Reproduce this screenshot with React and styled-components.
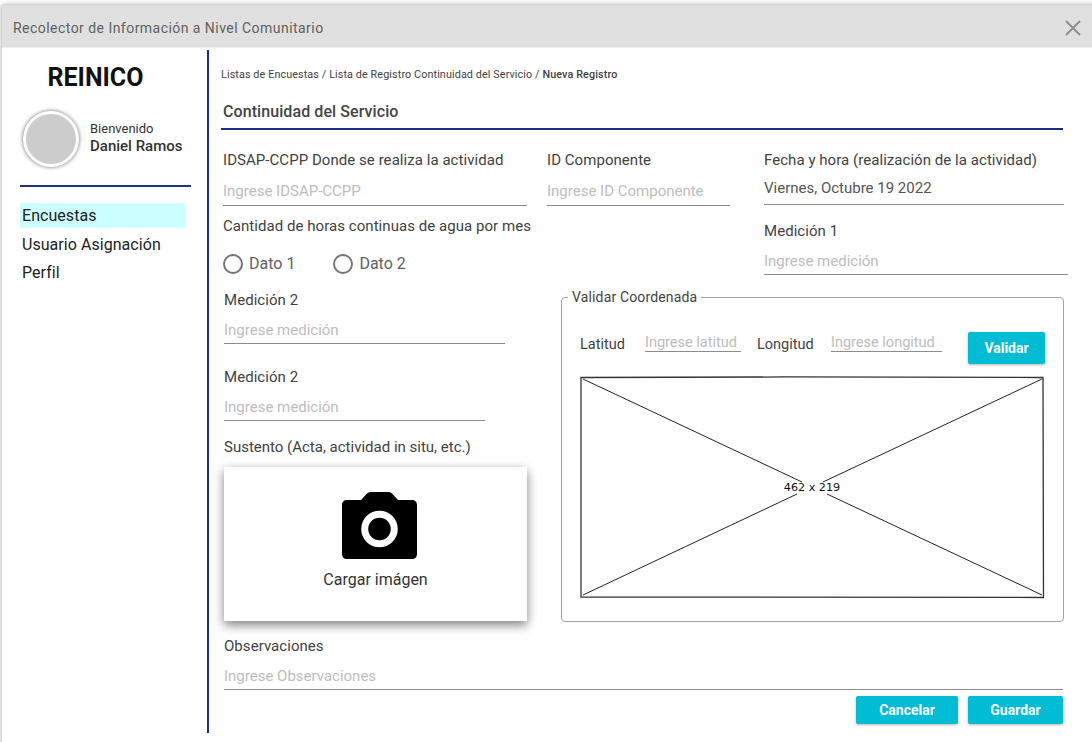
import React from 'react';
import styled, { createGlobalStyle } from 'styled-components';

const Global = createGlobalStyle`
  html, body { margin: 0; padding: 0; background: #fff; }
  body { font-family: Roboto, "Liberation Sans", sans-serif; color: #424242; overflow: hidden; }
`;

const Page = styled.div`
  width: 1092px;
  height: 742px;
  padding: 5px 0 0 2px;
  box-sizing: border-box;
  overflow: hidden;
`;
const Dialog = styled.div`
  width: 1095px;
  height: 750px;
  background: #fff;
  box-shadow: 0 0 5px rgba(0, 0, 0, 0.4);
  display: flex;
  flex-direction: column;
`;
const Header = styled.header`
  height: 43px;
  flex: none;
  background: #e0e0e0;
  display: flex;
  align-items: center;
  justify-content: space-between;
  padding: 3px 11px 0;
  width: 1090px;
  box-sizing: border-box;
  border-bottom: 1px solid #eeeeee;
`;
const HeaderTitle = styled.h1`
  margin: 0;
  font-size: 14px;
  font-weight: 400;
  color: #616161;
  letter-spacing: 0.46px;
`;
const CloseIcon = styled.svg`
  width: 16px;
  height: 16px;
  stroke: #8c8c8c;
  stroke-width: 1.8;
  fill: none;
`;
const Body = styled.div`
  display: flex;
  flex: 1;
`;
const Sidebar = styled.aside`
  flex: none;
  padding-top: 14px;
  box-sizing: border-box;
  height: 683px;
  margin-top: 2px;
  border-right: 2px solid #1f3082;
  width: 207px;
`;
const Brand = styled.div`
  width: 187px;
  text-align: center;
  font-size: 25px;
  line-height: 28px;
  font-weight: 700;
  color: #111;
`;
const UserRow = styled.div`
  display: flex;
  align-items: center;
  gap: 11px;
  margin: 19px 0 0 21px;
`;
const Avatar = styled.div`
  width: 50px;
  height: 50px;
  border-radius: 50%;
  background: #cccccc;
  border: 3px solid #fff;
  box-shadow: 0 0 4px rgba(0, 0, 0, 0.6);
`;
const UserText = styled.div`
  display: flex;
  flex-direction: column;
  margin-top: -2px;
`;
const Welcome = styled.span`
  font-size: 13px;
  line-height: 16px;
  color: #333;
`;
const UserName = styled.span`
  font-size: 15px;
  line-height: 18px;
  font-weight: 500;
  color: #333;
`;
const SideRule = styled.hr`
  margin: 18px 16px 0 18px;
  border: 0;
  height: 2px;
  background: #1f3082;
`;
const Menu = styled.nav`
  margin: 16px 0 0 18px;
  width: 165px;
  display: flex;
  flex-direction: column;
`;
const MenuItem = styled.a`
  height: 25px;
  margin-bottom: 3.5px;
  line-height: 25px;
  padding-left: 2px;
  font-size: 16px;
  letter-spacing: 0.05px;
  color: #222;
  background: ${p => (p.$active ? '#ccffff' : 'transparent')};
`;
const Main = styled.main`
  flex: none;
  width: 842px;
  margin-left: 12px;
  padding-top: 20px;
  box-sizing: border-box;
`;
const Crumbs = styled.div`
  font-size: 10.75px;
  line-height: 14px;
  color: #424242;
  letter-spacing: 0.12px;
  b { font-weight: 500; }
`;
const Title = styled.h2`
  margin: 15px 0 0;
  padding: 4px 0 0 2px;
  height: 33px;
  box-sizing: border-box;
  line-height: 21px;
  font-size: 16px;
  font-weight: 500;
  color: #444;
  letter-spacing: 0.08px;
  border-bottom: 2px solid #1f3082;
`;
const TopGrid = styled.div`
  display: grid;
  grid-template-columns: 304px 183px 314px;
  column-gap: 20px;
  margin: 20px 0 0 2px;
  & > :nth-child(3) { margin-left: 14px; }
`;
const Field = styled.div`
  display: flex;
  flex-direction: column;
  width: ${p => p.$w || 'auto'};
  margin-top: ${p => p.$mt || 0};
  margin-right: ${p => p.$mr || 0};
`;
const Label = styled.label`
  font-size: 15px;
  line-height: 20px;
  color: #424242;
  white-space: nowrap;
  letter-spacing: 0.05px;
`;
const Input = styled.div`
  height: 34px;
  margin-top: ${p => p.$mt || '2px'};
  box-sizing: border-box;
  border-bottom: 1px solid #8c8c8c;
  font-size: 15px;
  line-height: ${p => (p.$value ? '35px' : p.$lh || '39px')};
  color: ${p => (p.$value ? '#555' : '#bdbdbd')};
  white-space: nowrap;
`;
const MiddleRow = styled.div`
  display: flex;
  justify-content: space-between;
  margin: 10px 0 0 2px;
`;
const Radios = styled.div`
  display: flex;
  gap: 38px;
  margin-top: 18px;
`;
const Radio = styled.span`
  display: flex;
  align-items: center;
  gap: 6px;
  font-size: 16px;
  line-height: 20px;
  color: #616161;
  &::before {
    content: '';
    width: 20px;
    height: 20px;
    box-sizing: border-box;
    border: 2px solid #757575;
    border-radius: 50%;
  }
`;
const Columns = styled.div`
  display: flex;
  margin-top: 15px;
`;
const LeftColumn = styled.div`
  width: 340px;
  flex: none;
  padding-left: 3px;
  box-sizing: border-box;
`;
const Caption = styled.div`
  font-size: 15px;
  line-height: 20px;
  margin-top: 16px;
  color: #424242;
`;
const Upload = styled.div`
  width: 303px;
  height: 154px;
  margin-top: 10px;
  background: #fff;
  box-shadow: 0 4px 10px rgba(0, 0, 0, 0.5);
  display: flex;
  flex-direction: column;
  align-items: center;
  padding-top: 25px;
  box-sizing: border-box;
`;
const CameraIcon = styled.svg`
  width: 75px;
  height: 67px;
  display: block;
  margin-left: 8px;
`;
const UploadText = styled.span`
  margin-top: 11px;
  font-size: 16px;
  line-height: 20px;
  color: #333;
`;
const Fieldset = styled.fieldset`
  flex: none;
  width: 503px;
  height: 333px;
  margin: -1px 0 0 0;
  padding: 0;
  box-sizing: border-box;
  border: 1px solid #a3a396;
  border-radius: 4px;
`;
const Legend = styled.legend`
  margin-left: 6px;
  padding: 0 4px;
  font-size: 14px;
  line-height: 16px;
  color: #444;
  letter-spacing: 0.15px;
`;
const CoordRow = styled.div`
  display: flex;
  align-items: flex-start;
  margin: 27px 0 0 18px;
`;
const CoordLabel = styled.span`
  font-size: 14.5px;
  line-height: 20px;
  margin-top: 3px;
  margin-left: ${p => p.$ml || 0};
  width: ${p => p.$w};
  flex: none;
  color: #424242;
`;
const CoordInput = styled.div`
  width: ${p => p.$w};
  margin-left: ${p => p.$ml || 0};
  flex: none;
  height: 20px;
  box-sizing: border-box;
  line-height: 21px;
  font-size: 14.5px;
  color: #bdbdbd;
  border-bottom: 1px solid #8c8c8c;
  white-space: nowrap;
`;
const Button = styled.button`
  height: 32px;
  width: ${p => p.$w};
  margin-left: ${p => p.$ml || 0};
  flex: none;
  border: 0;
  border-radius: 2px;
  background: #00bcd4;
  color: #fff;
  font-family: inherit;
  font-weight: 700;
  font-size: 14px;
  padding: 0;
  box-shadow: 0 1px 3px rgba(0, 0, 0, 0.3);
`;
const Wire = styled.svg`
  display: block;
  width: 465px;
  height: 224px;
  margin: 12px 0 0 18px;
`;
const WireText = styled.text`
  font-family: "DejaVu Sans", sans-serif;
  font-size: 11.2px;
  fill: #111;
  text-anchor: middle;
`;
const Footer = styled.div`
  margin-left: 3px;
`;
const Observaciones = styled.div`
  margin-top: 14px;
  display: flex;
  flex-direction: column;
`;
const Actions = styled.div`
  display: flex;
  justify-content: flex-end;
  gap: 10px;
  margin: 6px 0 0 0;
`;
const ActionButton = styled(Button)`
  height: 28px;
`;

export default function App() {
  return (
    <Page>
      <Global />
      <Dialog>
        <Header>
          <HeaderTitle>Recolector de Información a Nivel Comunitario</HeaderTitle>
          <CloseIcon viewBox="0 0 16 16"><path d="M1 1l14 14M15 1L1 15" /></CloseIcon>
        </Header>
        <Body>
          <Sidebar>
            <Brand>REINICO</Brand>
            <UserRow>
              <Avatar />
              <UserText>
                <Welcome>Bienvenido</Welcome>
                <UserName>Daniel Ramos</UserName>
              </UserText>
            </UserRow>
            <SideRule />
            <Menu>
              <MenuItem $active>Encuestas</MenuItem>
              <MenuItem>Usuario Asignación</MenuItem>
              <MenuItem>Perfil</MenuItem>
            </Menu>
          </Sidebar>
          <Main>
            <Crumbs>Listas de Encuestas / Lista de Registro Continuidad del Servicio / <b>Nueva Registro</b></Crumbs>
            <Title>Continuidad del Servicio</Title>
            <TopGrid>
              <Field>
                <Label>IDSAP-CCPP Donde se realiza la actividad</Label>
                <Input>Ingrese IDSAP-CCPP</Input>
              </Field>
              <Field>
                <Label>ID Componente</Label>
                <Input>Ingrese ID Componente</Input>
              </Field>
              <Field>
                <Label>Fecha y hora (realización de la actividad)</Label>
                <Input $value $mt="1px">Viernes, Octubre 19 2022</Input>
              </Field>
            </TopGrid>
            <MiddleRow>
              <div>
                <Label>Cantidad de horas continuas de agua por mes</Label>
                <Radios>
                  <Radio>Dato 1</Radio>
                  <Radio>Dato 2</Radio>
                </Radios>
              </div>
              <Field $w="304px" $mt="5px" $mr="-5px">
                <Label>Medición 1</Label>
                <Input $mt="0" $lh="41px">Ingrese medición</Input>
              </Field>
            </MiddleRow>
            <Columns>
              <LeftColumn>
                <Field $w="281px">
                  <Label>Medición 2</Label>
                  <Input $mt="0" $lh="41px">Ingrese medición</Input>
                </Field>
                <Field $w="261px" $mt="23px">
                  <Label>Medición 2</Label>
                  <Input $mt="0" $lh="41px">Ingrese medición</Input>
                </Field>
                <Caption>Sustento (Acta, actividad in situ, etc.)</Caption>
                <Upload>
                  <CameraIcon viewBox="0 0 75 67">
                    <path fillRule="evenodd" d="M5 8H19L25 1.500C26 .5 27 0 28 0H47C48 0 49 .5 50 1.500L56 8H70C73 8 75 10 75 13V62C75 65 73 67 70 67H5C2 67 0 65 0 62V13C0 10 2 8 5 8ZM37.500 18.700a18.300 18.300 0 1 0 0 36.600a18.300 18.300 0 0 0 0-36.600ZM37.500 25.700a11.300 11.300 0 1 1 0 22.600a11.300 11.300 0 0 1 0-22.600Z" />
                  </CameraIcon>
                  <UploadText>Cargar imágen</UploadText>
                </Upload>
              </LeftColumn>
              <Fieldset>
                <Legend>Validar Coordenada</Legend>
                <CoordRow>
                  <CoordLabel $w="65px">Latitud</CoordLabel>
                  <CoordInput $w="96px">Ingrese latitud</CoordInput>
                  <CoordLabel $w="74px" $ml="16px">Longitud</CoordLabel>
                  <CoordInput $w="111px">Ingrese longitud</CoordInput>
                  <Button $w="77px" $ml="26px">Validar</Button>
                </CoordRow>
                <Wire viewBox="0 0 465 224">
                  <path d="M1 1.500C150 1 320 .5 463 1.500L463.500 221.500C300 222 150 221 1 221Z" fill="#fff" stroke="#333" strokeWidth="1.3" />
                  <path d="M3 3L222 106M462 3L243 106M3 219L217 118M462 219L247 118" stroke="#222" strokeWidth="1" fill="none" />
                  <WireText x="232" y="115">462 x 219</WireText>
                </Wire>
              </Fieldset>
            </Columns>
            <Footer>
              <Observaciones>
                <Label>Observaciones</Label>
                <Input $mt="0" $lh="41px">Ingrese Observaciones</Input>
              </Observaciones>
              <Actions>
                <ActionButton $w="102px">Cancelar</ActionButton>
                <ActionButton $w="95px">Guardar</ActionButton>
              </Actions>
            </Footer>
          </Main>
        </Body>
      </Dialog>
    </Page>
  );
}
